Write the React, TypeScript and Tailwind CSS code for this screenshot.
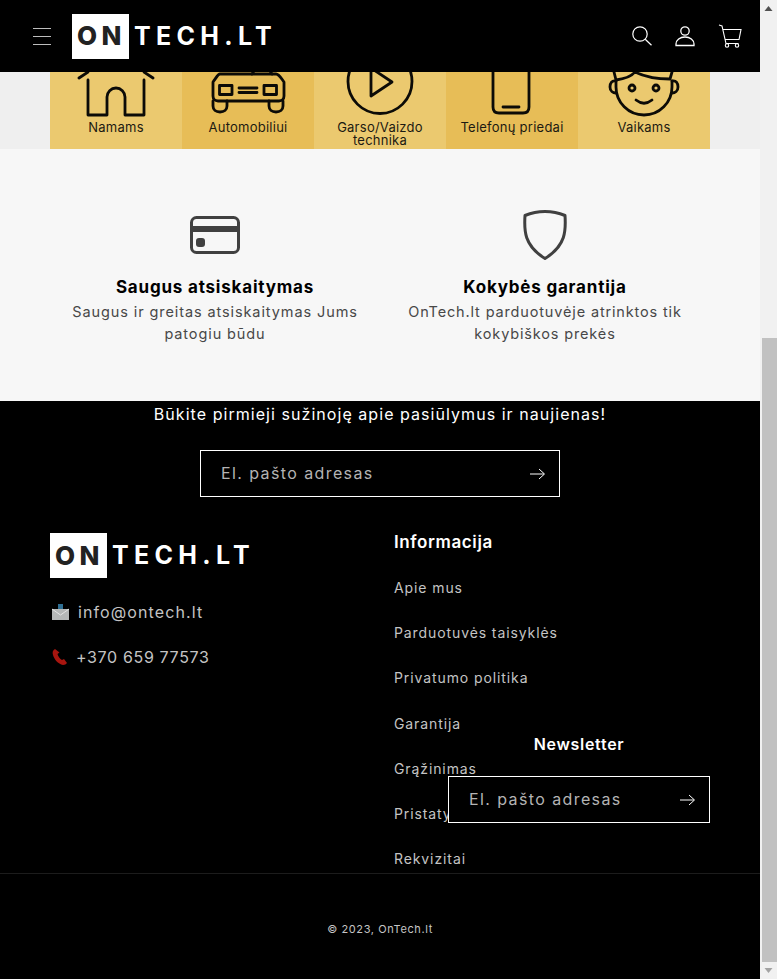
const FONT = "font-['Inter','Liberation_Sans',sans-serif]";

function Logo() {
  return (
    <div className="flex items-center h-[45px] leading-none font-bold">
      <div className="w-[57px] h-[45px] bg-white text-[#222] text-[26px] font-extrabold tracking-[4.5px] flex items-center pl-[5px] shrink-0 overflow-hidden">ON</div>
      <span className="text-white text-[25px] tracking-[5.3px] pl-[5px]">TECH.LT</span>
    </div>
  );
}

function ArrowIcon({ className }: { className?: string }) {
  return (
    <svg viewBox="0 0 15 12" className={`w-[15px] h-[12px] ${className ?? ""}`} fill="none" stroke="currentColor" strokeWidth="1">
      <path d="M0 6h14M9 1l5.5 5L9 11" />
    </svg>
  );
}

function EmailBox({ className }: { className: string }) {
  return (
    <div className={`h-[47px] border border-white bg-black flex items-center justify-between ${className}`}>
      <span className="pl-[20px] pb-[2px] text-[16px] text-[#b4b4b4] tracking-[1.4px]">El. pašto adresas</span>
      <ArrowIcon className="text-white mr-[14px]" />
    </div>
  );
}

function Tile({ dark, label, children }: { dark?: boolean; label: React.ReactNode; children: React.ReactNode }) {
  return (
    <div className={`w-[132px] h-[77px] flex flex-col items-center text-center text-[#1c1a12] text-[13px] leading-[13px] tracking-[0.25px] ${dark ? "bg-[#e7bd57]" : "bg-[#ebc96f]"}`}>
      <svg viewBox="0 0 132 49" className="w-[132px] h-[49px] shrink-0" fill="none" stroke="#0c0b07" strokeWidth="2.8" strokeLinecap="round" strokeLinejoin="round">
        {children}
      </svg>
      <div>{label}</div>
    </div>
  );
}

const LINKS = ["Apie mus", "Parduotuvės taisyklės", "Privatumo politika", "Garantija", "Grąžinimas", "Pristatymas", "Rekvizitai"];

export default function App() {
  return (
    <div className={`${FONT} flex w-[777px] h-[979px] overflow-hidden`}>
      <div className="w-[760px] shrink-0">
        {/* Header */}
        <header className="h-[72px] bg-black flex items-center pl-[33px] pr-[18px]">
          <svg viewBox="0 0 18 18" className="w-[18px] h-[18px] mr-[21px]" fill="none" stroke="#bdbdbd" strokeWidth="1">
            <path d="M0 1.5h18M0 9.500h18M0 17.500h18" />
          </svg>
          <Logo />
          <div className="ml-auto flex items-center gap-[22px] text-white">
            <svg viewBox="0 0 22 24" className="w-[22px] h-[24px] translate-x-[1px]" fill="none" stroke="currentColor" strokeWidth="1.2">
              <circle cx="9" cy="10" r="7.2" />
              <path d="M14.2 15.2l6.3 6.1" />
            </svg>
            <svg viewBox="0 0 22 24" className="w-[22px] h-[24px]" fill="none" stroke="currentColor" strokeWidth="1.3">
              <circle cx="11" cy="7" r="4.2" />
              <path d="M2 21.5v-1.5c0-4 4-7 9-7s9 3 9 7v1.5z" />
            </svg>
            <svg viewBox="0 0 24 24" className="w-[24px] h-[24px]" fill="none" stroke="currentColor" strokeWidth="1.1">
              <path d="M1 1l3 1 4 17.5h12.5M5 5.5h18l-2 10H7.2" />
              <circle cx="9" cy="21.5" r="1.7" />
              <circle cx="19" cy="21.5" r="1.7" />
            </svg>
          </div>
        </header>

        {/* Category banner */}
        <div className="h-[77px] bg-[#efefef] flex px-[50px]">
          <Tile label="Namams">
            <path d="M29 6l9-6M103 6l-9-6M38 8v35h19V25a9 9 0 0 1 18 0v18h19V8" />
          </Tile>
          <Tile dark label="Automobiliui">
            <path d="M38 2h56c3 0 5 4 8 8v14c0 3-2 5-5 5H36c-3 0-5-2-5-5V10c3-4 5-8 7-8z" />
            <path d="M31 29v5c0 4 3 6 7 6s7-2 7-6v-5M87 29v5c0 4 3 6 7 6s7-2 7-6v-5" />
            <rect x="37.500" y="13.500" width="12.500" height="9" />
            <rect x="82" y="13.500" width="12.500" height="9" />
            <path d="M57 16h18M57 20.500h18M70 2l2-3M90 2l-2-3" />
          </Tile>
          <Tile label={<>Garso/Vaizdo<br />technika</>}>
            <circle cx="66" cy="9.500" r="32" />
            <path d="M57 -4v28l21-14z" />
          </Tile>
          <Tile dark label="Telefonų priedai">
            <path d="M47 -4v39c0 4 2 6 6 6h24c4 0 6-2 6-6V-4M57 35h16" />
          </Tile>
          <Tile label="Vaikams">
            <path d="M38 9v6a28 28 0 0 0 56 0V9" />
            <path d="M38 9c-4-1-6 2-6 6s3 6 6 6M94 9c4-1 6 2 6 6s-3 6-6 6" />
            <path d="M36 0l2 8c8-1 15-3 19-8M57 0c8 4 22 7 35 7l2-7" />
            <circle cx="54" cy="16" r="3" />
            <circle cx="78" cy="16" r="3" />
            <path d="M58 28c5 4 11 4 16 0" />
          </Tile>
        </div>

        {/* Guarantees */}
        <section className="h-[252px] bg-[#f7f7f7] pt-[61px] px-[50px] grid grid-cols-2">
          <div className="flex flex-col items-center text-center">
            <div className="h-[50px] flex items-center justify-center">
              <svg viewBox="0 0 50 38" className="w-[50px] h-[38px]" fill="none" stroke="#404040" strokeWidth="3">
                <rect x="1.500" y="1.500" width="47" height="35" rx="5" />
                <path d="M1.500 13h47" strokeWidth="6" />
                <rect x="6" y="22" width="9" height="9" rx="3" fill="#404040" stroke="none" />
              </svg>
            </div>
            <h3 className="mt-[15px] text-[17px] leading-[24px] font-bold text-black tracking-[0.8px]">Saugus atsiskaitymas</h3>
            <p className="mt-[2px] w-[300px] text-[14.5px] leading-[22px] text-[#484848] tracking-[0.9px]">Saugus ir greitas atsiskaitymas Jums patogiu būdu</p>
          </div>
          <div className="flex flex-col items-center text-center">
            <div className="h-[50px] flex items-center justify-center">
              <svg viewBox="0 0 44 50" className="w-[44px] h-[50px]" fill="none" stroke="#404040" strokeWidth="3" strokeLinejoin="round">
                <path d="M22 1.500c6 0 14 1.500 20 4 1 15 1 30-20 43-21-13-21-28-20-43 6-2.500 14-4 20-4z" />
              </svg>
            </div>
            <h3 className="mt-[15px] text-[17px] leading-[24px] font-bold text-black tracking-[0.8px]">Kokybės garantija</h3>
            <p className="mt-[2px] w-[300px] text-[14.5px] leading-[22px] text-[#484848] tracking-[0.85px]">OnTech.lt parduotuvėje atrinktos tik kokybiškos prekės</p>
          </div>
        </section>

        {/* Footer */}
        <footer className="h-[578px] bg-black relative">
          <div className="text-center text-white text-[16px] leading-[26px] tracking-[1.05px]">Būkite pirmieji sužinoję apie pasiūlymus ir naujienas!</div>
          <EmailBox className="w-[360px] mx-auto mt-[23px]" />

          <div className="h-[340px] mt-[36px] px-[50px] flex">
            <div className="w-[344px] shrink-0">
              <Logo />
              <div className="mt-[22px] flex items-center gap-[9px] h-[24px] text-[16px] text-[#c4c4c4] tracking-[1.1px]">
                <svg viewBox="0 0 17 16" className="w-[17px] h-[16px] ml-[2px]">
                  <rect x="6" y="0" width="5" height="6" fill="#2f6f93" />
                  <rect x="0" y="5" width="17" height="11" fill="#b5b8b8" />
                  <path d="M0 5l8.500 6 8.500-6" fill="none" stroke="#e4e4e4" strokeWidth="1" />
                </svg>
                info@ontech.lt
              </div>
              <div className="mt-[21px] flex items-center gap-[8px] h-[24px] text-[16px] text-[#c4c4c4] tracking-[0.65px]">
                <svg viewBox="0 0 16 16" className="w-[16px] h-[16px] ml-[2px]">
                  <path d="M3 0c-2 1-3 3-2 6 1 4 5 9 10 10 2 0 3-1 4-2l-3-4-2 1C8 10 6 7 5.500 5l2-1.500z" fill="#a8150f" />
                </svg>
                +370 659 77573
              </div>
            </div>
            <div className="-mt-[3px]">
              <h4 className="text-[17px] leading-[24px] font-semibold text-white tracking-[0.6px]">Informacija</h4>
              <ul className="mt-[24px] flex flex-col gap-[25px] text-[14px] leading-[20.200px] text-[#c4c4c4] tracking-[0.9px]">
                {LINKS.map(l => <li key={l}>{l}</li>)}
              </ul>
            </div>
          </div>

          {/* Newsletter over the links */}
          <div className="absolute left-[448px] top-[331px] w-[262px]">
            <div className="text-center text-white text-[16px] leading-[24px] font-semibold tracking-[0.7px]">Newsletter</div>
            <EmailBox className="mt-[20px]" />
          </div>

          <div className="border-t border-[#1c1c1c] h-[106px] pt-[46px] text-center text-[11px] leading-[18px] text-[#c4c4c4] tracking-[0.6px]">© 2023, OnTech.lt</div>
        </footer>
      </div>

      {/* Scrollbar */}
      <div className="w-[17px] bg-[#f1f1f1] flex flex-col justify-between items-end">
        <svg viewBox="0 0 17 17" className="w-[17px] h-[17px]"><path d="M4.500 11h8l-4-5z" fill="#505050" /></svg>
        <div className="w-[15px] h-[624px] bg-[#c1c1c1] mt-auto" />
        <svg viewBox="0 0 17 17" className="w-[17px] h-[17px]"><path d="M4.500 6h8l-4 5z" fill="#a3a3a3" /></svg>
      </div>
    </div>
  );
}
